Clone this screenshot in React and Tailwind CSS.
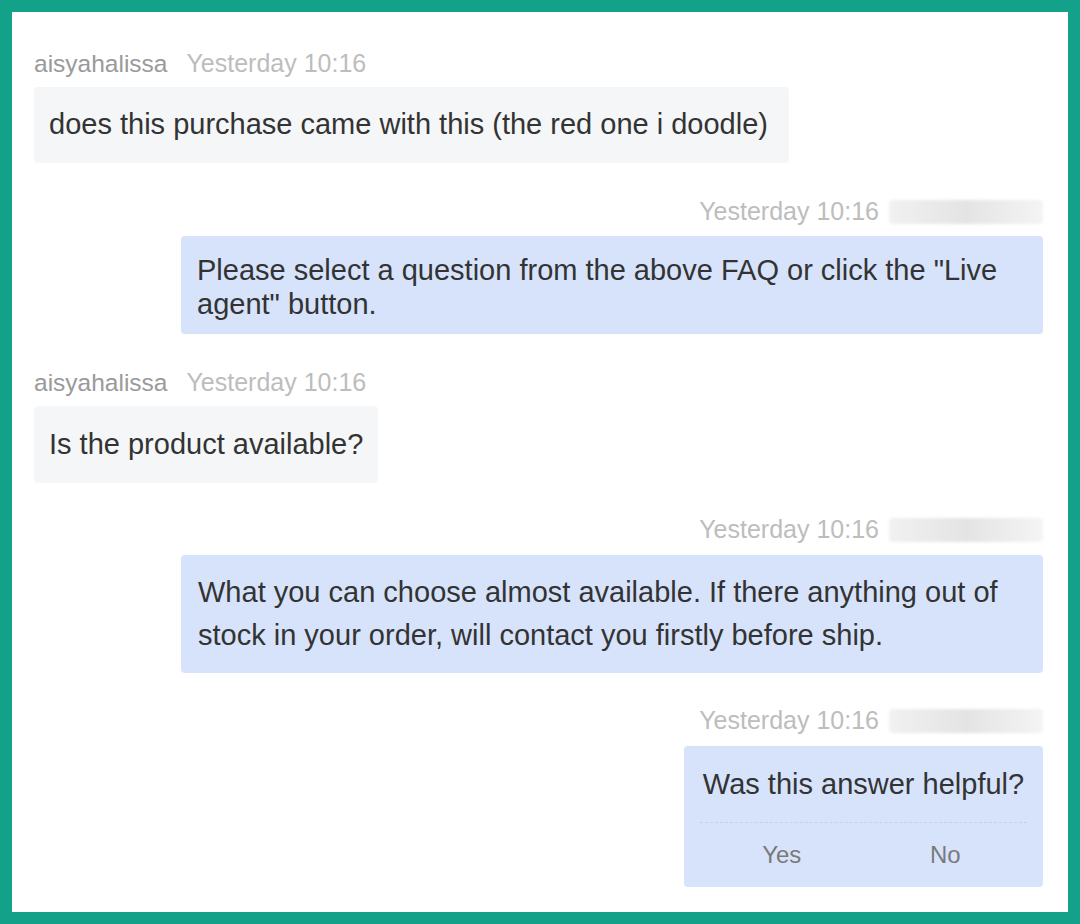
import React from 'react';

const font = { fontFamily: '"Liberation Sans", Arial, sans-serif' };

const Redacted = () => (
  <div className="ml-[10px] h-[24px] w-[154px] rounded-sm bg-gradient-to-r from-[#f1f1f1] via-[#e4e4e4] to-[#f4f4f4] blur-[1.5px]" />
);

const LeftMeta = ({ name, time, className = '' }) => (
  <div className={`flex h-[30px] items-center gap-[19px] ${className}`}>
    <span className="text-[24.5px] text-[#9a9a9a]">{name}</span>
    <span className="text-[25px] text-[#bdbdbd]">{time}</span>
  </div>
);

const RightMeta = ({ time, className = '' }) => (
  <div className={`flex h-[30px] items-center justify-end text-[25px] ${className}`}>
    <span className="text-[#bdbdbd]">{time}</span>
    <Redacted />
  </div>
);

const LeftBubble = ({ children, className = '' }) => (
  <div className={`self-start rounded bg-[#f5f6f7] px-[15px] text-[29px] text-[#333] ${className}`}>
    {children}
  </div>
);

const RightBubble = ({ children, className = '' }) => (
  <div className={`self-end rounded bg-[#d6e3fb] text-[29px] text-[#333] ${className}`}>
    {children}
  </div>
);

export default function App() {
  return (
    <div style={font} className="box-border h-[924px] w-[1080px] border-[12px] border-[#13a189] bg-white">
      <div className="flex flex-col pl-[22px] pr-[25px] pt-[37px]">
        <LeftMeta name="aisyahalissa" time="Yesterday 10:16" />
        <LeftBubble className="mt-[8px] flex h-[76px] w-[755px] items-center">
          does this purchase came with this (the red one i doodle)
        </LeftBubble>

        <RightMeta time="Yesterday 10:16" className="mt-[34px]" />
        <RightBubble className="mt-[9px] w-[862px] px-[16px] pb-[13px] pt-[17px] leading-[34px]">
          Please select a question from the above FAQ or click the "Live agent" button.
        </RightBubble>

        <LeftMeta name="aisyahalissa" time="Yesterday 10:16" className="mt-[34px]" />
        <LeftBubble className="mt-[8px] flex h-[77px] items-center">
          Is the product available?
        </LeftBubble>

        <RightMeta time="Yesterday 10:16" className="mt-[32px]" />
        <RightBubble className="mt-[10px] w-[862px] px-[17px] pb-[16px] pt-[16px] leading-[43px]">
          What you can choose almost available. If there anything out of stock in your order, will contact you firstly before ship.
        </RightBubble>

        <RightMeta time="Yesterday 10:16" className="mt-[33px]" />
        <RightBubble className="mt-[10px] flex h-[141px] w-[359px] flex-col px-[16px]">
          <div className="flex h-[76px] items-center justify-center pt-[2px]">Was this answer helpful?</div>
          <div className="border-t border-dashed border-[#c3d1ed]" />
          <div className="flex flex-1 items-center text-[24px] text-[#7a7a7a]">
            <span className="w-1/2 text-center">Yes</span>
            <span className="w-1/2 text-center">No</span>
          </div>
        </RightBubble>
      </div>
    </div>
  );
}
